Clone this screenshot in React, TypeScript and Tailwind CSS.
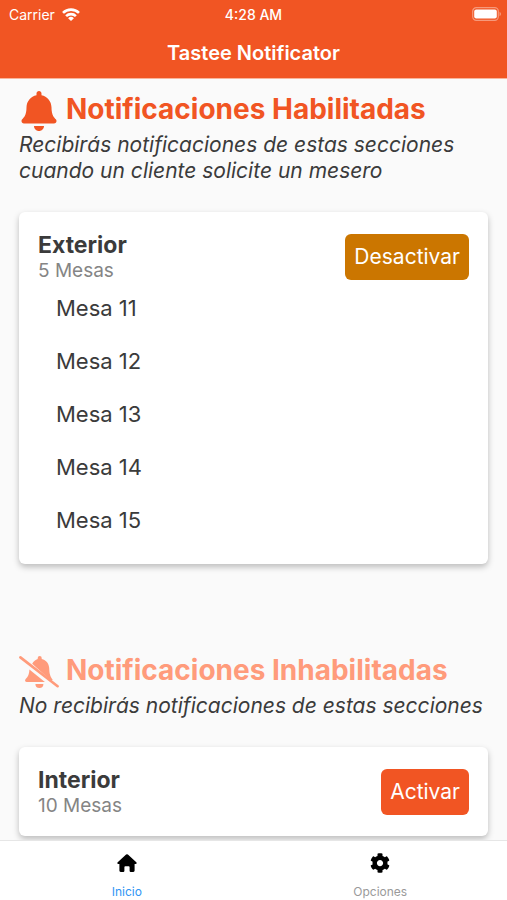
import type { ReactNode } from 'react';
import { FaBell, FaCog } from 'react-icons/fa';

type Section = { name: string; count: number; tables: string[] };

const enabled: Section = {
  name: 'Exterior',
  count: 5,
  tables: ['Mesa 11', 'Mesa 12', 'Mesa 13', 'Mesa 14', 'Mesa 15'],
};
const disabled: Section = { name: 'Interior', count: 10, tables: [] };

function WifiIcon() {
  return (
    <svg viewBox="0 0 18 13" className="h-[13px] w-[18px]" fill="none" stroke="currentColor" strokeWidth="2.6" aria-hidden="true">
      <path d="M1 4.9a11.4 11.4 0 0 1 16 0" />
      <path d="M4.1 8.1a7 7 0 0 1 9.8 0" />
      <path d="M9 13 6.1 10.2a4.1 4.1 0 0 1 5.8 0z" fill="currentColor" stroke="none" />
    </svg>
  );
}

function BatteryIcon() {
  return (
    <svg viewBox="0 0 30 14" className="h-[14px] w-[30px]" aria-hidden="true">
      <rect x="0.7" y="0.7" width="25.6" height="12.6" rx="3.6" fill="none" stroke="white" strokeOpacity="0.4" strokeWidth="1.2" />
      <rect x="2.2" y="2.4" width="22.6" height="9.2" rx="2" fill="white" />
      <path d="M27.6 4.8c1.6.7 1.6 3.7 0 4.4z" fill="white" fillOpacity="0.5" />
    </svg>
  );
}

function BellSlashIcon() {
  return (
    <svg viewBox="0 0 40 32" className="h-8 w-10 shrink-0" fill="currentColor" aria-hidden="true">
      <path d="M1.4 1.4 38.6 30.2" stroke="currentColor" strokeWidth="2.6" strokeLinecap="round" />
      <path d="M13.2 7.8c1.4-2.6 3.3-4.2 5.5-4.8V2a2 2 0 0 1 4 0v1c4.6 1 7.3 4.600 7.500 9 .200 5.500.800 8.200 3.500 11.800l-1.500.900z" />
      <path d="M10.400 13.400 25.900 25.900H7.800c-1.600 0-2.300-1.500-1.300-2.700 2.300-2.500 3.700-4.700 3.900-9.800z" />
      <path d="M16.400 28h8a4 4 0 0 1-8 0z" />
    </svg>
  );
}

function HomeIcon() {
  return (
    <svg viewBox="0 0 20 18" className="h-[18px] w-5" fill="currentColor" aria-hidden="true">
      <path d="M9.1.6a1.3 1.3 0 0 1 1.8 0l8.4 7.6c.8.8.4 1.8-.6 1.8h-1.1v6.6c0 .8-.5 1.3-1.3 1.3h-2.9c-.5 0-.8-.3-.8-.8v-3.9c0-.6-.3-.9-.9-.9H8.3c-.6 0-.9.3-.9.9v3.9c0 .5-.3.8-.8.8H3.7c-.8 0-1.3-.5-1.3-1.3V10H1.3c-1 0-1.4-1-.6-1.8z" />
    </svg>
  );
}

function SectionCard({ section, action }: { section: Section; action: ReactNode }) {
  return (
    <article className="rounded-md bg-white px-[19px] pt-5 pb-[17px] shadow-[0_3px_6px_rgba(0,0,0,0.25)]">
      <div className="flex items-start justify-between">
        <div>
          <h3 className="text-[23px] leading-[26px] font-bold">{section.name}</h3>
          <p className="text-[19px] leading-[26px] text-[#858585]">{section.count} Mesas</p>
        </div>
        {action}
      </div>
      {section.tables.length > 0 && (
        <ul className="-mt-0.5 pl-[18px]">
          {section.tables.map((table) => (
            <li key={table} className="text-[22px] leading-[53px]">
              {table}
            </li>
          ))}
        </ul>
      )}
    </article>
  );
}

export default function App() {
  return (
    <div className="flex h-screen flex-col bg-[#fafafa] font-['Inter','Liberation_Sans',sans-serif] text-[#3b3b3b]">
      <header className="shrink-0 border-b border-[#f9b59b] bg-[#f15523] text-white">
        <div className="grid h-7 grid-cols-3 items-center px-[9px] text-[14px]">
          <div className="flex items-center gap-[7px]">
            <span>Carrier</span>
            <WifiIcon />
          </div>
          <span className="text-center font-medium">4:28 AM</span>
          <div className="-mr-1 flex justify-end">
            <BatteryIcon />
          </div>
        </div>
        <h1 className="text-center text-[20px] leading-[50px] font-semibold">Tastee Notificator</h1>
      </header>

      <main className="min-h-0 flex-1 overflow-hidden px-[19px] pt-3">
        <section>
          <div className="mb-px flex h-10 items-center text-[#f15523]">
            <FaBell className="w-10 shrink-0 text-[40px]" aria-hidden="true" />
            <h2 className="pb-1 pl-[7px] text-[28px] leading-8 font-bold whitespace-nowrap">Notificaciones Habilitadas</h2>
          </div>
          <p className="text-[21px] leading-[26px] italic">
            Recibirás notificaciones de estas secciones cuando un cliente solicite un mesero
          </p>
          <div className="mt-7">
            <SectionCard
              section={enabled}
              action={
                <button type="button" className="mt-[2px] h-[46px] rounded-md bg-[#cb7600] px-[9px] text-[21px] text-white">
                  Desactivar
                </button>
              }
            />
          </div>
        </section>

        <section className="mt-[88px]">
          <div className="mb-px flex h-10 items-center text-[#ff9b7b]">
            <BellSlashIcon />
            <h2 className="pb-1 pl-[7px] text-[28px] leading-8 font-bold whitespace-nowrap">Notificaciones Inhabilitadas</h2>
          </div>
          <p className="text-[21px] leading-[26px] italic">No recibirás notificaciones de estas secciones</p>
          <div className="mt-7">
            <SectionCard
              section={disabled}
              action={
                <button type="button" className="mt-[2px] h-[46px] rounded-md bg-[#f15523] px-[9px] text-[21px] text-white">
                  Activar
                </button>
              }
            />
          </div>
        </section>
      </main>

      <nav className="grid h-[60px] shrink-0 grid-cols-2 border-t border-[#e6e6e6] bg-white text-[12px]">
        <a href="#inicio" aria-current="page" className="flex flex-col items-center pt-3 text-[#2f95f5]">
          <span className="flex h-5 items-center text-black">
            <HomeIcon />
          </span>
          <span className="mt-[11px] leading-4">Inicio</span>
        </a>
        <a href="#opciones" className="flex flex-col items-center pt-3 text-[#9a9a9a]">
          <span className="flex h-5 items-center text-black">
            <FaCog className="text-[20px]" aria-hidden="true" />
          </span>
          <span className="mt-[11px] leading-4">Opciones</span>
        </a>
      </nav>
    </div>
  );
}
